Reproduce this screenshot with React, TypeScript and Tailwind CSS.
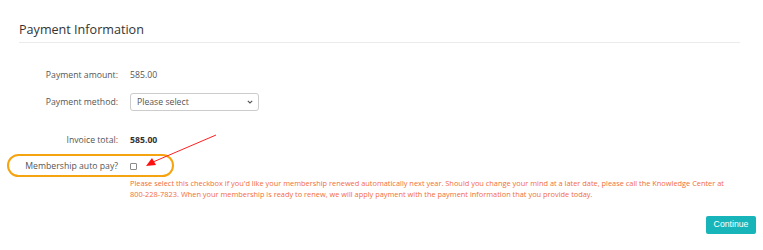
import React from "react";

const font = { fontFamily: '"Open Sans", "Liberation Sans", sans-serif' };

const Row = ({ label, children, className = "" }: { label: string; children: React.ReactNode; className?: string }) => (
  <div className={`grid grid-cols-[99px_1fr] items-center gap-x-[12px] text-[8.7px] leading-[14px] ${className}`}>
    <div className="text-right text-[#555]">{label}</div>
    <div className="flex items-center">{children}</div>
  </div>
);

const App = () => {
  return (
    <div className="relative h-[250px] w-[763px] overflow-hidden bg-white" style={font}>
      <div className="pl-[19px] pr-[7px] pt-[22px]">
        {/* header */}
        <div className="mr-[16px] border-b border-[#ebebeb] pb-[4px]">
          <h2 className="text-[12.6px] leading-[16px] text-[#333]">Payment Information</h2>
        </div>

        <Row label="Payment amount:" className="mt-[25px]">
          <span className="text-[#555]">585.00</span>
        </Row>

        <Row label="Payment method:" className="mt-[11px]">
          <div className="flex h-[18px] w-[129px] items-center justify-between rounded-[3px] border border-[#ccc] pl-[6px] pr-[5px]">
            <span className="text-[#555]">Please select</span>
            <svg width="6" height="4" viewBox="0 0 6 4">
              <path d="M0.8 0.8 L3 3 L5.2 0.8" fill="none" stroke="#555" strokeWidth="1.1" />
            </svg>
          </div>
        </Row>

        <Row label="Invoice total:" className="mt-[22px]">
          <span className="font-bold text-[#333]">585.00</span>
        </Row>

        <div className="relative mt-[12px]">
          <Row label="Membership auto pay?">
            <div className="mt-[1px] h-[7px] w-[7px] rounded-[1px] border border-[#8a8a8a]" />
          </Row>
          <div className="pointer-events-none absolute left-[-12px] top-[-5px] h-[23px] w-[167px] rounded-full border-2 border-[#f5a40f]" />
        </div>

        <p className="ml-[111px] mt-[5px] text-[7.4px] leading-[11px] text-[#f26d3d]">
          Please select this checkbox if you'd like your membership renewed automatically next year. Should you change your mind at a later date, please call the Knowledge Center at
          <br />
          800-228-7823. When your membership is ready to renew, we will apply payment with the payment information that you provide today.
        </p>

        <div className="mt-[16px] flex justify-end">
          <button
            className="h-[18px] w-[50px] rounded-[2px] bg-[#17b4b9] text-[8.7px] text-white"
            style={{ fontFamily: '"Liberation Sans", Arial, sans-serif' }}
          >
            Continue
          </button>
        </div>
      </div>

      {/* annotation arrow */}
      <svg className="pointer-events-none absolute left-0 top-0" width="763" height="250">
        <line x1="216" y1="135" x2="153" y2="162" stroke="#ff2020" strokeWidth="1" />
        <polygon points="146,166 152,158 156,165" fill="#ff1010" />
      </svg>
    </div>
  );
};

export default App;
